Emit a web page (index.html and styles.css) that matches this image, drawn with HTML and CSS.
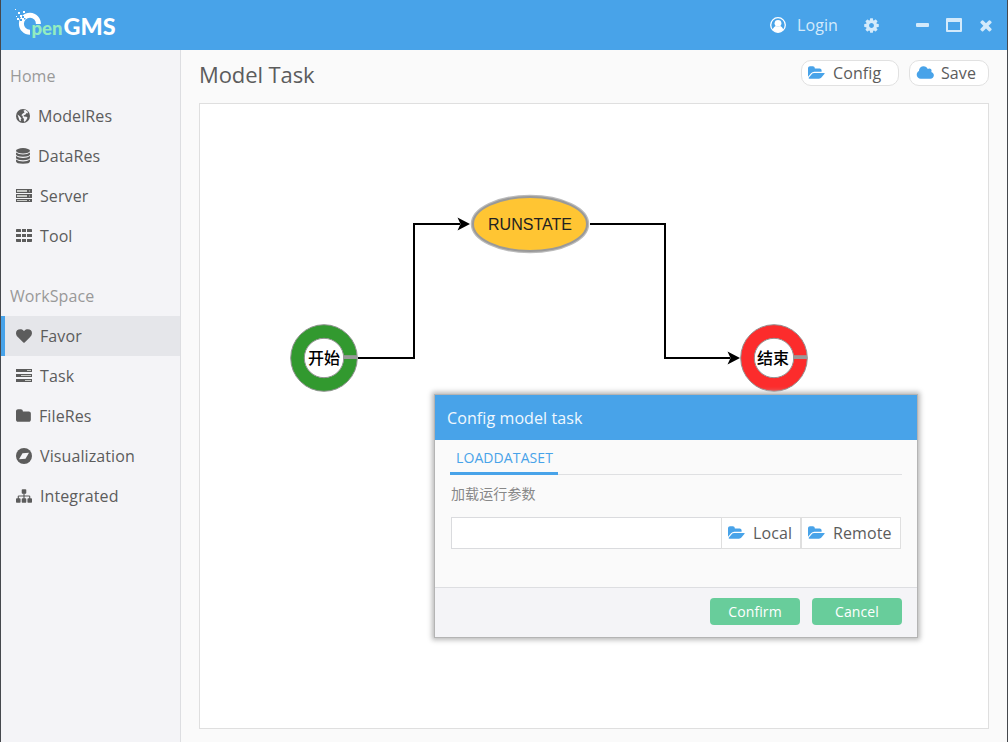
FILE: index.html
```html
<!DOCTYPE html>
<html lang="en">
<head>
<meta charset="utf-8">
<title>OpenGMS</title>
<link rel="stylesheet" href="styles.css">
</head>
<body>
<svg class="defs" width="0" height="0" aria-hidden="true">
  <symbol id="folder-open" viewBox="0 0 1920 1792"><path d="M1879 952q0 31-31 66l-336 396q-43 51-120.500 86.500t-143.500 35.500h-1088q-34 0-60.500-13t-26.500-43q0-31 31-66l336-396q43-51 120.500-86.500t143.500-35.500h1088q34 0 60.500 13t26.500 43zm-343-344v160h-832q-94 0-197 47.500t-164 119.500l-337 396-5 6q0-4-.5-12.500t-.5-12.500v-960q0-92 66-158t158-66h320q92 0 158 66t66 158v32h544q92 0 158 66t66 158z"/></symbol>
</svg>
<div class="window">
  <header class="topbar">
    <svg class="logo" viewBox="0 0 110 36" width="110" height="36">
      <path class="logo-ring" d="M20 25.200A8.500 8.500 0 1 1 28.400 17"/>
      <path class="logo-dots" d="M5 2h1v1H5zM8 5h2v2H8zM13 4h2v2h-2zM6 9h1v1H6zM10 8h2v2h-2zM7 11h2v2H7z"/>
      <path class="logo-holes" d="M12 9h2v2h-2zM10 12h2v2h-2zM14 11h1.500v1.500H14z"/>
      <text class="logo-pen" x="21.500" y="27.500" textLength="31" lengthAdjust="spacingAndGlyphs">pen</text>
      <text class="logo-gms" x="53.500" y="27.500" textLength="52" lengthAdjust="spacingAndGlyphs">GMS</text>
    </svg>
    <div class="tools">
      <svg class="ico-user" viewBox="0 0 16 16" width="16" height="16"><circle class="user-ring" cx="8" cy="8" r="7.300"/><circle cx="8" cy="6.300" r="3.400"/><path d="M2.700 12.500C3.500 10.300 5 9.300 6 9.100Q8 10.300 10 9.100C11 9.300 12.500 10.300 13.300 12.500Q11 15.300 8 15.300T2.700 12.500z"/></svg>
      <span class="login">Login</span>
      <svg class="ico-cog" viewBox="0 0 1792 1792" width="17" height="17"><path d="M1152 896q0-106-75-181t-181-75-181 75-75 181 75 181 181 75 181-75 75-181zm512-109v222q0 12-8 23t-20 13l-185 28q-19 54-39 91 35 50 107 138 10 12 10 25t-9 23q-27 37-99 108t-94 71q-12 0-26-9l-138-108q-44 23-91 38-16 136-29 186-7 28-36 28h-222q-14 0-24.500-8.500t-11.500-21.500l-28-184q-49-16-90-37l-141 107q-10 9-25 9-14 0-25-11-126-114-165-168-7-10-7-23 0-12 8-23 15-21 51-66.500t54-70.500q-27-50-41-99l-183-27q-13-2-21-12.500t-8-23.500v-222q0-12 8-23t19-13l186-28q14-46 39-92-40-57-107-138-10-12-10-24 0-10 9-23 26-36 98.500-107.500t94.500-71.500q13 0 26 10l138 107q44-23 91-38 16-136 29-186 7-28 36-28h222q14 0 24.500 8.500t11.500 21.500l28 184q49 16 90 37l142-107q9-9 24-9 13 0 25 10 129 119 165 170 7 8 7 22 0 12-8 23-15 21-51 66.500t-54 70.500q26 50 41 98l183 28q13 2 21 12.500t8 23.500z"/></svg>
      <svg class="ico-min" viewBox="0 0 13 16" width="13" height="16"><rect y="6" width="13" height="4" rx="1"/></svg>
      <svg class="ico-max" viewBox="0 0 16 16" width="16" height="16"><path fill-rule="evenodd" d="M1 1h14q1 0 1 1v12q0 1-1 1H1q-1 0-1-1V2Q0 1 1 1zM2 5v8h12V5z"/></svg>
      <svg class="ico-close" viewBox="270 270 1252 1312" width="12" height="13"><path d="M1490 1322q0 40-28 68l-136 136q-28 28-68 28t-68-28l-294-294-294 294q-28 28-68 28t-68-28l-136-136q-28-28-28-68t28-68l294-294-294-294q-28-28-28-68t28-68l136-136q28-28 68-28t68 28l294 294 294-294q28-28 68-28t68 28l136 136q28 28 28 68t-28 68l-294 294 294 294q28 28 28 68z"/></svg>
    </div>
  </header>
  <div class="body">
    <nav class="sidebar">
      <h2 class="group">Home</h2>
      <a class="item"><svg viewBox="0 0 16 16" width="16" height="16"><circle cx="7" cy="8" r="7"/><path class="cut" d="M7.500 2.500l2-.5 2.500 2-.5 1.500-1-.5-1 1.500-2 1 .5 1 2.500.3 1 1-1.500 2.700-1.500 1.500-.8-1.500.3-1.500L6.500 9.300l.3-1.300L5.300 7.200l1.500-1.700 1.700-1zM1.500 6.500l2 1.500 2 2.500-.8 1L5 13.300 3.500 12.500z"/></svg><span class="n1">ModelRes</span></a>
      <a class="item"><svg viewBox="0 0 16 16" width="16" height="16"><ellipse cx="7" cy="2.800" rx="7" ry="2.700"/><path d="M0 4.600q2.500 2 7 2t7-2v1.700q0 2.400-7 2.400T0 6.300zM0 8.100q2.500 2 7 2t7-2v1.700q0 2.400-7 2.400T0 9.800zM0 11.600q2.500 2 7 2t7-2v1.700q0 2.500-7 2.500T0 13.300z"/></svg><span class="n1">DataRes</span></a>
      <a class="item"><svg viewBox="0 0 16 16" width="16" height="16"><path d="M0 1h16v4H0zM0 6h16v4H0zM0 11h16v3H0z"/><path class="slot" d="M1 2h10v2H1zM1 7h10v2H1zM1 12h10v1H1zM13 2.500h1v1h-1zM13 7.500h1v1h-1zM13 12h1v1h-1z"/></svg><span>Server</span></a>
      <a class="item"><svg viewBox="0 0 16 16" width="16" height="16"><path d="M.7 1h3.600q.7 0 .7.700V4H0V1.700Q0 1 .7 1zM6 1h4v3H6zM11 1h4.300q.7 0 .7.700V4h-5zM0 6h5v3H0zM6 6h4v3H6zM11 6h5v3h-5zM0 11h5v3H.7q-.7 0-.7-.7zM6 11h4v3H6zM11 11h5v2.300q0 .7-.7.700H11z"/></svg><span>Tool</span></a>
      <h2 class="group second">WorkSpace</h2>
      <a class="item active"><svg viewBox="0 0 1792 1792" width="16" height="16"><path d="M896 1664q-26 0-44-18l-624-602q-10-8-27.500-26t-55.500-65.500-68-97.500-53.500-121-23.500-138q0-220 127-344t351-124q62 0 126.500 21.500t120 58 95.500 68.500 76 68q36-36 76-68t95.500-68.500 120-58 126.500-21.500q224 0 351 124t127 344q0 221-229 450l-623 600q-18 18-44 18z"/></svg><span>Favor</span></a>
      <a class="item"><svg viewBox="0 0 16 16" width="16" height="16"><path d="M0 1h16v3H0zM0 6h16v3H0zM0 11h16v3H0z"/><path class="slot" d="M11 2h4v1h-4zM5 7h10v1H5zM9 12h6v1H9z"/></svg><span>Task</span></a>
      <a class="item"><svg viewBox="0 0 1792 1792" width="16" height="16"><path d="M1664 608v704q0 92-66 158t-158 66H224q-92 0-158-66T0 1312V352q0-92 66-158t158-66h320q92 0 158 66t66 158v32h672q92 0 158 66t66 158z"/></svg><span class="n2">FileRes</span></a>
      <a class="item"><svg viewBox="0 0 16 16" width="16" height="16"><circle cx="8" cy="8" r="8"/><path class="cut" d="M6.500 5.300 13 4.800 9.500 10.700 3 11.200z"/></svg><span>Visualization</span></a>
      <a class="item"><svg viewBox="0 0 1792 1792" width="16" height="16"><path d="M1792 1248v320q0 40-28 68t-68 28h-320q-40 0-68-28t-28-68v-320q0-40 28-68t68-28h96v-192h-512v192h96q40 0 68 28t28 68v320q0 40-28 68t-68 28h-320q-40 0-68-28t-28-68v-320q0-40 28-68t68-28h96v-192h-512v192h96q40 0 68 28t28 68v320q0 40-28 68t-68 28h-320q-40 0-68-28t-28-68v-320q0-40 28-68t68-28h96v-192q0-52 38-90t90-38h512v-192h-96q-40 0-68-28t-28-68v-320q0-40 28-68t68-28h320q40 0 68 28t28 68v320q0 40-28 68t-68 28h-96v192h512q52 0 90 38t38 90v192h96q40 0 68 28t28 68z"/></svg><span>Integrated</span></a>
    </nav>
    <main class="main">
      <div class="heading">
        <h1 class="title">Model Task</h1>
        <button class="pill config"><svg width="17" height="16"><use href="#folder-open"/></svg><span>Config</span></button>
        <button class="pill save"><svg viewBox="0 0 1984 1792" width="18" height="16"><path d="M1984 1152q0 159-112.500 271.500t-271.500 112.500h-1088q-185 0-316.500-131.500t-131.500-316.500q0-132 71-241.500t187-163.500q-2-28-2-43 0-212 150-362t362-150q158 0 286.500 88t187.500 230q70-62 166-62 106 0 181 75t75 181q0 75-41 138 129 30 213 134.500t84 239.500z"/></svg><span>Save</span></button>
      </div>
      <section class="canvas">
        <svg class="flow" viewBox="200 104 788 624" width="788" height="624">
          <path class="edge" d="M358 358H414V224H460"/>
          <path d="M457.500 217.500 470 224 457.500 230.500 460.500 224z"/>
          <path class="edge" d="M590 224H665V358H730"/>
          <path d="M727.500 351.500 740 358 727.500 364.500 730.500 358z"/>
          <ellipse class="state-rim" cx="530" cy="224" rx="57.500" ry="27.500"/>
          <ellipse class="state" cx="530" cy="224" rx="57" ry="27"/>
          <text class="state-label" x="530" y="230" textLength="84">RUNSTATE</text>
          <circle class="start" cx="324" cy="358" r="26.500"/>
          <circle class="rim" cx="324" cy="358" r="33.300"/><circle class="rim" cx="324" cy="358" r="19.700"/>
          <rect class="notch" x="343" y="355.200" width="14" height="3.800"/>
          <text class="node-label" x="324" y="363.500">开始</text>
          <circle class="end" cx="774" cy="358" r="26.500"/>
          <circle class="rim" cx="774" cy="358" r="33.300"/><circle class="rim" cx="774" cy="358" r="19.700"/>
          <rect class="notch" x="793" y="355.200" width="14" height="3.800"/>
          <text class="node-label" x="773" y="363.500">结束</text>
        </svg>
        <div class="dialog">
          <div class="dialog-head">Config model task</div>
          <div class="dialog-body">
            <div class="tabs"><span class="tab">LOADDATASET</span></div>
            <div class="label">加载运行参数</div>
            <div class="field">
              <input class="path" type="text" aria-label="Path">
              <button class="pick local"><svg width="17" height="16"><use href="#folder-open"/></svg><span>Local</span></button>
              <button class="pick remote"><svg width="17" height="16"><use href="#folder-open"/></svg><span>Remote</span></button>
            </div>
          </div>
          <div class="dialog-foot"><button class="btn">Confirm</button><button class="btn">Cancel</button></div>
        </div>
      </section>
    </main>
  </div>
</div>
</body>
</html>
```

FILE: styles.css
```css
* { box-sizing: border-box; }
body { margin: 0; font: 16px/20px "Open Sans", "Noto Sans CJK SC", sans-serif; letter-spacing: .1px; color: #5c5c5c; }
svg { display: block; flex: none; fill: currentColor; letter-spacing: 0; }
.defs { position: absolute; }
button { font: inherit; letter-spacing: inherit; color: inherit; margin: 0; padding: 0; }

.window { width: 1008px; height: 742px; border: solid #45484d; border-width: 0 1px; display: flex; flex-direction: column; overflow: hidden; background: #fafafa; }

.topbar { height: 50px; flex: none; background: #48a3e9; display: flex; justify-content: space-between; padding: 0 15px 0 9px; }
.logo { margin-top: 7px; font-family: Lato, sans-serif; }
.logo-ring { fill: none; stroke: #fff; stroke-width: 5; }
.logo-dots { fill: #fff; }
.logo-holes { fill: #48a3e9; }
.logo-pen { fill: #93ecc0; font-size: 19px; font-weight: 900; }
.logo-gms { fill: #fff; font-size: 23.500px; font-weight: 900; }
.tools { display: flex; align-items: center; color: #d3eafb; height: 50px; }
.ico-user { color: #fff; margin-right: 11px; }
.user-ring { fill: none; stroke: #fff; stroke-width: 1.300; }
.login { width: 41px; margin-right: 25px; }
.ico-cog { margin-right: 36px; }
.ico-min { margin-right: 17px; }
.ico-max { margin-right: 18px; }
.ico-close { margin-top: 1px; }

.body { flex: 1; display: flex; }
.sidebar { width: 180px; flex: none; background: #f4f4f7; border-right: 1px solid #dddee1; padding-top: 6px; }
.group { margin: 0; height: 40px; padding: 10px 9px; font-size: 16px; font-weight: 400; color: #999; }
.second { margin-top: 20px; }
.item { height: 40px; display: flex; align-items: center; gap: 8px; border-left: 4px solid transparent; padding-left: 11px; }
.active { background: #e5e6ea; border-left-color: #48a3e9; }
.n1 { margin-left: -2px; }
.n2 { margin-left: -1px; }
.cut { fill: #f4f4f7; }
.slot { fill: #c9cbc7; }

.main { flex: 1; padding: 10px 18px 13px; display: flex; flex-direction: column; }
.heading { display: flex; align-items: flex-start; height: 43px; }
.title { margin: -1px auto 0 0; font-size: 22px; line-height: 30px; font-weight: 400; letter-spacing: -.1px; }
.pill { display: flex; align-items: center; height: 26px; background: #fff; border: 1px solid #e1e1e1; border-radius: 10px; padding-left: 6px; }
.pill svg, .pick svg { color: #48a3e9; }
.config { width: 98px; gap: 8px; margin-right: 10px; }
.save { width: 80px; gap: 7px; }

.canvas { position: relative; height: 626px; background: #fff; border: 1px solid #dfdfdf; }
.flow { fill: #000; }
.edge { fill: none; stroke: #000; stroke-width: 2; }
.state-rim { fill: none; stroke: #bbb; stroke-width: 3.500; }
.state { fill: #ffc533; stroke: #999; stroke-width: 2; }
.state-label { font: 16px "Liberation Sans", Arial, sans-serif; text-anchor: middle; fill: #222; }
.start, .end { fill: #fff; stroke-width: 13.500; }
.start { stroke: #32992f; }
.end { stroke: #fc2c2c; }
.rim { fill: none; stroke: #929292; stroke-width: 1; }
.notch { fill: #999; }
.node-label { font: 500 16px "Noto Sans CJK SC", sans-serif; text-anchor: middle; }

.dialog { position: absolute; left: 235px; top: 291px; width: 482px; height: 242px; display: flex; flex-direction: column; background: #fafafa; box-shadow: 0 0 0 1px #b4b4b4, 0 0 5px 3px #b8b8b8; }
.dialog-head { height: 45px; padding: 13px 12px; background: #48a3e9; color: #f0f8fe; }
.dialog-body { flex: 1; padding: 0 15px; }
.tabs { height: 35px; border-bottom: 1px solid #dfe0e2; display: flex; }
.tab { height: 35px; width: 108px; border-bottom: 3px solid #48a3e9; padding: 8px 6px; font-size: 14px; color: #48a3e9; }
.label { margin: 8px 0 14px 1px; font: 14px/20px "Noto Sans CJK SC", sans-serif; color: #888; }
.field { display: flex; height: 32px; margin: 0 1px; }
.path { width: 270px; border: 1px solid #dadbde; border-right: 0; background: #fff; padding: 0 8px; }
.pick { display: flex; align-items: center; gap: 8px; padding-left: 6px; background: #fff; border: 1px solid #dfdfdf; }
.local { width: 80px; }
.remote { width: 100px; }
.dialog-foot { height: 50px; border-top: 1px solid #dddee1; background: #f4f4f7; display: flex; justify-content: flex-end; gap: 12px; padding: 10px 15px; }
.btn { width: 90px; height: 27px; border: 0; border-radius: 4px; background: #68cd9b; color: #fff; font-size: 14px; }
```
